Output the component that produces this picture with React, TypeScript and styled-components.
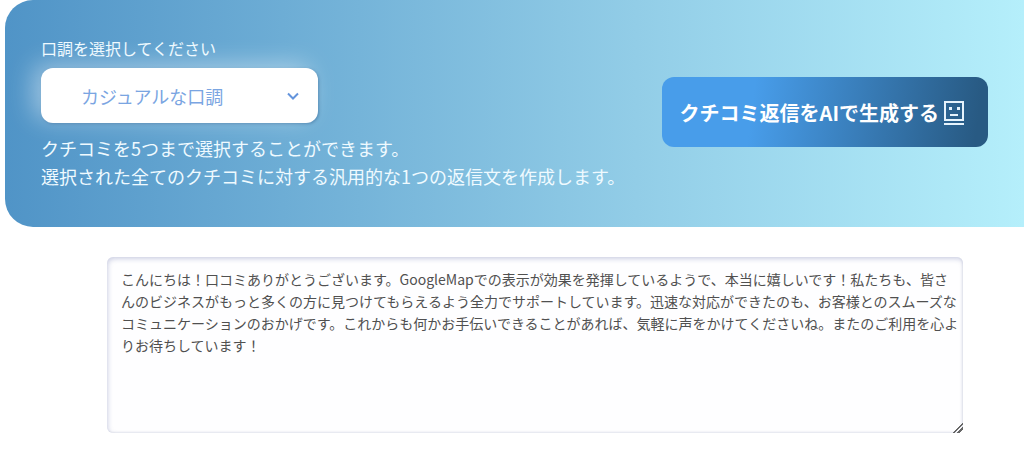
import React, { useState } from "react";
import styled, { createGlobalStyle } from "styled-components";

const GlobalStyle = createGlobalStyle`
  *, *::before, *::after { box-sizing: border-box; }
  body {
    margin: 0;
    background: #fff;
    font-family: "Noto Sans CJK JP", "Noto Sans", sans-serif;
  }
`;

const Page = styled.main`
  display: flex;
  flex-direction: column;
  gap: 30px;
  padding-bottom: 20px;
`;

const Panel = styled.section`
  display: flex;
  align-items: center;
  justify-content: space-between;
  gap: 24px;
  margin-left: 5px;
  padding: 34px 36px 37px;
  border-radius: 28px 0 0 28px;
  background: linear-gradient(90deg, #5094c7 0%, #92cde7 62%, #b5effb 100%);
  color: #effaff;
`;

const Settings = styled.div`
  display: flex;
  flex-direction: column;
  align-items: flex-start;
`;

const ToneLabel = styled.label`
  font-size: 16px;
  line-height: 28px;
`;

const SelectBox = styled.div`
  position: relative;
  width: 277px;
  max-width: 100%;
  margin: 6px 0 11px;
`;

const ToneSelect = styled.select`
  appearance: none;
  display: block;
  width: 100%;
  height: 55px;
  padding: 0 40px;
  border: 0;
  border-radius: 12px;
  background: #fff;
  box-shadow: -8px -4px 24px rgba(255, 255, 255, 0.42), 1px 1px 3px rgba(40, 90, 140, 0.5);
  color: #7aa5e2;
  font-family: inherit;
  font-size: 18px;
  font-weight: 400;
`;

const Chevron = styled.svg`
  position: absolute;
  top: 50%;
  right: 18px;
  width: 14px;
  height: 14px;
  margin-top: -7px;
  pointer-events: none;
`;

const Description = styled.p`
  margin: 0;
  font-size: 18px;
  line-height: 28px;
`;

const GenerateButton = styled.button`
  display: flex;
  flex-shrink: 0;
  align-items: center;
  gap: 4px;
  height: 70px;
  padding: 0 23px 0 18px;
  border: 0;
  border-radius: 12px;
  background: linear-gradient(97deg, #489dea 0%, #489dea 28%, #285a83 96%);
  color: #fff;
  font-family: inherit;
  font-size: 20px;
  font-weight: 700;
  cursor: pointer;
`;

const ReplyArea = styled.textarea`
  display: block;
  height: 176px;
  margin: 0 61px 0 107px;
  padding: 11px 1px 11px 14px;
  border: 0;
  border-radius: 6px;
  outline: 0;
  background: #fefeff;
  box-shadow: inset 1px 2px 5px rgba(95, 105, 165, 0.3), inset -1px -1px 2px rgba(95, 105, 140, 0.12);
  color: #505050;
  font-family: inherit;
  font-size: 14px;
  font-weight: 400;
  line-height: 22px;
  resize: vertical;

  &::-webkit-resizer {
    background: linear-gradient(
      135deg,
      transparent 64%,
      #666 64%,
      #666 71%,
      transparent 71%,
      transparent 80%,
      #666 80%,
      #666 87%,
      transparent 87%
    );
  }
`;

const initialReply =
  "こんにちは！口コミありがとうございます。GoogleMapでの表示が効果を発揮しているようで、本当に嬉しいです！私たちも、皆さ\n" +
  "んのビジネスがもっと多くの方に見つけてもらえるよう全力でサポートしています。迅速な対応ができたのも、お客様とのスムーズな" +
  "コミュニケーションのおかげです。これからも何かお手伝いできることがあれば、気軽に声をかけてくださいね。またのご利用を心よ" +
  "りお待ちしています！";

function RobotIcon() {
  return (
    <svg width="22" height="28" viewBox="0 0 22 28" fill="none" stroke="#e6f3fc" strokeWidth="2" aria-hidden="true">
      <path d="M2 4h18v18H2z" />
      <path d="M1 26h20" />
      <path d="M6 10.5h3M14 10.5h3" strokeWidth="3" />
      <path d="M7 17h8" />
    </svg>
  );
}

export default function App() {
  const [reply, setReply] = useState(initialReply);

  return (
    <>
      <GlobalStyle />
      <Page>
        <Panel>
          <Settings>
            <ToneLabel htmlFor="tone">口調を選択してください</ToneLabel>
            <SelectBox>
              <ToneSelect id="tone" defaultValue="casual">
                <option value="casual">カジュアルな口調</option>
              </ToneSelect>
              <Chevron viewBox="0 0 14 14" fill="none" stroke="#6494dc" strokeWidth="2" aria-hidden="true">
                <path d="M2 4.5l5 5 5-5" />
              </Chevron>
            </SelectBox>
            <Description>
              クチコミを5つまで選択することができます。
              <br />
              選択された全てのクチコミに対する汎用的な1つの返信文を作成します。
            </Description>
          </Settings>
          <GenerateButton type="button">
            クチコミ返信をAIで生成する
            <RobotIcon />
          </GenerateButton>
        </Panel>
        <ReplyArea
          aria-label="返信文"
          value={reply}
          onChange={(event) => setReply(event.target.value)}
          spellCheck={false}
        />
      </Page>
    </>
  );
}
